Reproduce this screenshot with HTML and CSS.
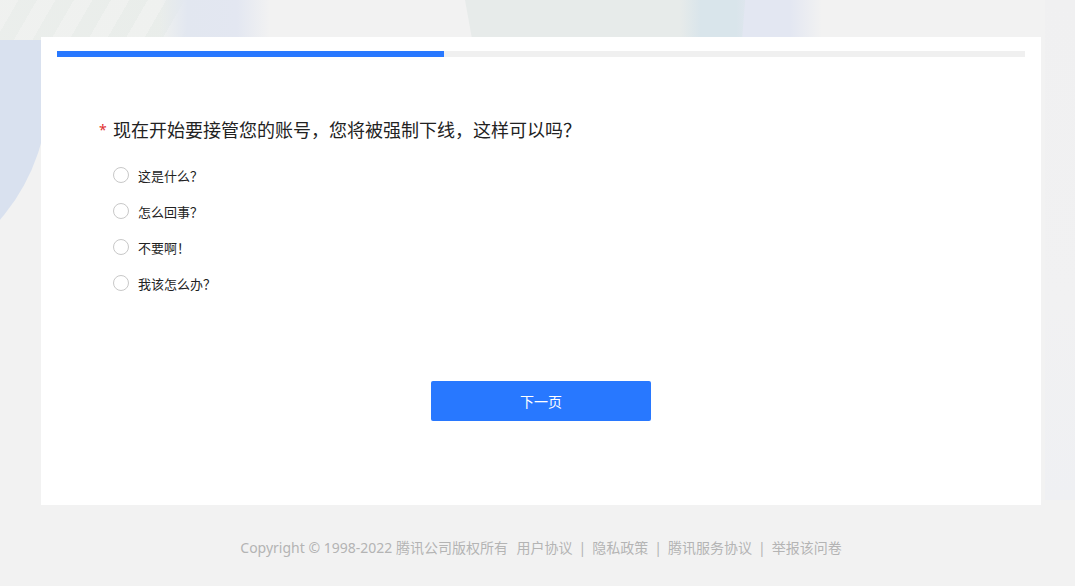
FILE: index.html
```html
<!DOCTYPE html>
<html lang="zh-CN">
<head>
<meta charset="utf-8">
<title>问卷</title>
<link rel="stylesheet" href="styles.css">
</head>
<body>
<div class="backdrop" aria-hidden="true">
  <div class="deco deco-circle-left"></div>
  <div class="deco deco-stripes"></div>
  <div class="deco deco-blue-left"></div>
  <div class="deco deco-slab"></div>
  <div class="deco deco-teal"></div>
  <div class="deco deco-lilac"></div>
  <div class="deco deco-right"></div>
</div>
<div class="page">
  <main class="card">
    <div class="progress"><div class="progress-fill" style="width:40%"></div></div>
    <section class="question">
      <h2 class="q-title"><span class="required">*</span><span>现在开始要接管您的账号，您将被强制下线，这样可以吗？</span></h2>
      <ul class="options">
        <li class="option"><span class="radio"></span><span class="label">这是什么？</span></li>
        <li class="option"><span class="radio"></span><span class="label">怎么回事？</span></li>
        <li class="option"><span class="radio"></span><span class="label">不要啊！</span></li>
        <li class="option"><span class="radio"></span><span class="label">我该怎么办？</span></li>
      </ul>
    </section>
    <div class="actions"><button class="btn-next" type="button">下一页</button></div>
  </main>
  <footer class="footer">
    <span class="copy">Copyright © 1998-2022 腾讯公司版权所有</span>
    <a>用户协议</a><span class="sep">|</span><a>隐私政策</a><span class="sep">|</span><a>腾讯服务协议</a><span class="sep">|</span><a>举报该问卷</a>
  </footer>
</div>
</body>
</html>
```
FILE: styles.css
```css
* { box-sizing: border-box; }
html, body { margin: 0; padding: 0; }
body {
  background: #f2f2f2;
  font-family: "Noto Sans", "Noto Sans CJK SC", sans-serif;
  color: #222;
  overflow: hidden;
  height: 586px;
  position: relative;
}

/* decorative background */
.backdrop { position: absolute; inset: 0; overflow: hidden; z-index: 0; }
.deco { position: absolute; }
.deco-circle-left {
  left: -260px; top: -110px; width: 310px; height: 380px;
  border-radius: 50%;
  background: #d9e1ef;
}
.deco-stripes {
  left: 0; top: 0; width: 190px; height: 40px;
  background:
    linear-gradient(90deg, rgba(242,242,242,0.2), rgba(242,242,242,0)),
    repeating-linear-gradient(120deg, #eff1ef 0 16px, #e9edea 16px 32px);
}
.deco-blue-left {
  left: 160px; top: 0; width: 110px; height: 40px;
  background: linear-gradient(90deg, rgba(223,230,238,0), #e2e7f0 25%, #e3e7f1 70%, rgba(242,242,242,0));
}
.deco-slab {
  left: 465px; top: 0; width: 240px; height: 40px;
  background: #e7ebea;
  clip-path: polygon(0 0, 100% 0, 100% 100%, 3% 100%);
}
.deco-teal {
  left: 680px; top: 0; width: 70px; height: 40px;
  background: linear-gradient(90deg, #e7ebea, #d9e5eb 30%, #d9e5eb 80%, #e1e6ef);
}
.deco-lilac {
  left: 742px; top: 0; width: 80px; height: 40px;
  background: linear-gradient(90deg, #e3e7f2 60%, rgba(242,242,242,0));
  clip-path: polygon(4% 0, 100% 0, 100% 100%, 0 100%);
}
.deco-right {
  right: -30px; top: 0; width: 60px; height: 500px;
  background: linear-gradient(180deg, #f0f0f1, #f1f1f2 60%, #eff0f3);
}

.page {
  position: relative;
  z-index: 1;
  padding: 37px 34px 0 41px;
}

.card {
  width: 1000px;
  height: 468px;
  background: #fff;
  padding: 14px 16px 0;
  display: flex;
  flex-direction: column;
}

.progress {
  height: 6px;
  background: #f0f0f0;
}
.progress-fill { height: 100%; background: #2878ff; }

.question { padding: 61px 0 0 42px; }
.q-title {
  margin: 0;
  height: 24px;
  font-size: 18px;
  font-weight: normal;
  line-height: 24px;
  color: #222;
  display: flex;
  gap: 5px;
}
.required { color: #e0302e; font-size: 14px; line-height: 24px; width: 9px; }

.options {
  list-style: none;
  margin: 15px 0 0;
  padding: 0 0 0 14px;
}
.option {
  height: 36px;
  display: flex;
  align-items: center;
  gap: 9px;
  font-size: 13px;
  color: #222;
}
.radio {
  width: 16px; height: 16px;
  border: 1px solid #c8c8c8;
  border-radius: 50%;
  background: #fff;
}

.actions {
  margin-top: 80px;
  display: flex;
  justify-content: center;
}
.btn-next {
  width: 220px; height: 40px;
  border: 0;
  border-radius: 2px;
  background: #2878ff;
  color: #fff;
  font-family: inherit;
  font-size: 14px;
}

.footer {
  width: 1000px;
  margin-top: 33px;
  text-align: center;
  font-size: 14px;
  line-height: 20px;
  color: #b4b4b4;
}
.footer a { color: #b4b4b4; }
.copy { margin-right: 5px; }
.sep { margin: 0 6px; }
```
